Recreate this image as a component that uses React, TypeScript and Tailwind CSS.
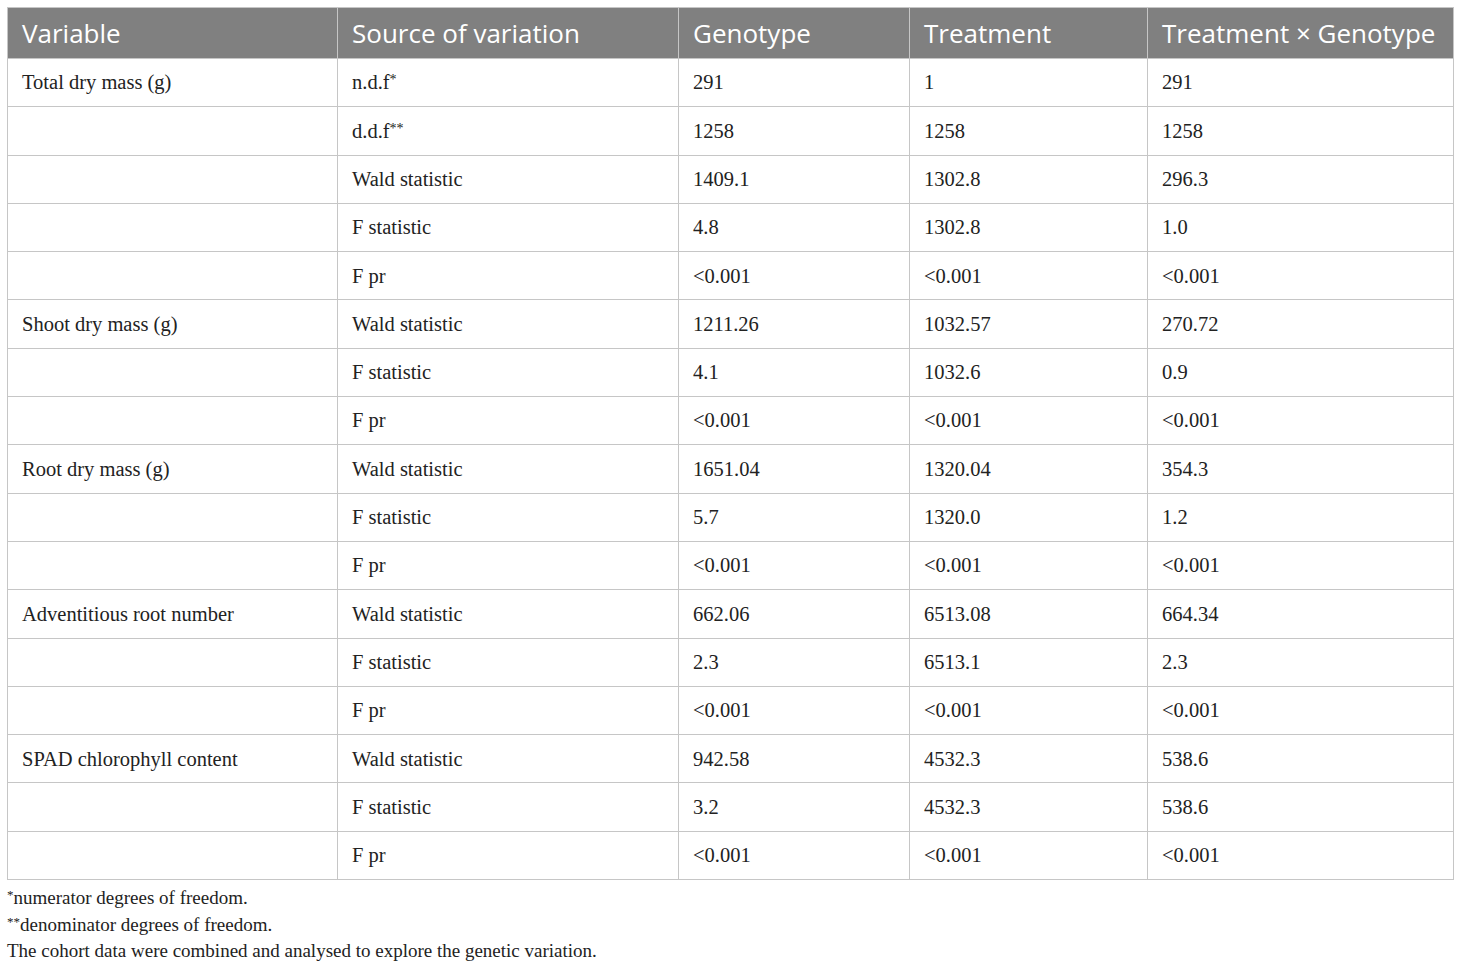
const rows: [string, string, string, string, string][] = [
  ['Total dry mass (g)', 'n.d.f*', '291', '1', '291'],
  ['', 'd.d.f**', '1258', '1258', '1258'],
  ['', 'Wald statistic', '1409.1', '1302.8', '296.3'],
  ['', 'F statistic', '4.8', '1302.8', '1.0'],
  ['', 'F pr', '<0.001', '<0.001', '<0.001'],
  ['Shoot dry mass (g)', 'Wald statistic', '1211.26', '1032.57', '270.72'],
  ['', 'F statistic', '4.1', '1032.6', '0.9'],
  ['', 'F pr', '<0.001', '<0.001', '<0.001'],
  ['Root dry mass (g)', 'Wald statistic', '1651.04', '1320.04', '354.3'],
  ['', 'F statistic', '5.7', '1320.0', '1.2'],
  ['', 'F pr', '<0.001', '<0.001', '<0.001'],
  ['Adventitious root number', 'Wald statistic', '662.06', '6513.08', '664.34'],
  ['', 'F statistic', '2.3', '6513.1', '2.3'],
  ['', 'F pr', '<0.001', '<0.001', '<0.001'],
  ['SPAD chlorophyll content', 'Wald statistic', '942.58', '4532.3', '538.6'],
  ['', 'F statistic', '3.2', '4532.3', '538.6'],
  ['', 'F pr', '<0.001', '<0.001', '<0.001'],
];

const headers = ['Variable', 'Source of variation', 'Genotype', 'Treatment', 'Treatment × Genotype'];
const widths = ['w-[330px]', 'w-[341px]', 'w-[231px]', 'w-[238px]', 'w-[306px]'];

function Source({ text }: { text: string }) {
  // asterisks sit raised like footnote marks
  const m = text.match(/^(.*?)(\*+)$/);
  if (!m) return <>{text}</>;
  return (
    <>
      {m[1]}
      <span className="relative -top-[5px] text-[14px]">{m[2]}</span>
    </>
  );
}

export default function App() {
  return (
    <div className="min-h-screen bg-white pt-[7px] pl-[7px] font-['Liberation_Serif',serif] text-[#222]">
      <table className="table-fixed border-collapse w-[1446px]">
        <thead>
          <tr className="h-[51px] bg-[#808080]">
            {headers.map((h, i) => (
              <th
                key={h}
                className={`${widths[i]} border border-[#c6c6c6] pl-[14px] text-left align-middle font-normal text-white text-[26px] leading-none font-['Open_Sans',sans-serif]`}
              >
                {h}
              </th>
            ))}
          </tr>
        </thead>
        <tbody>
          {rows.map((r, ri) => (
            <tr key={ri} className="h-[48.3px]">
              {r.map((c, ci) => (
                <td key={ci} className="border border-[#c6c6c6] pl-[14px] align-middle text-[20.5px] leading-none">
                  {ci === 1 ? <Source text={c} /> : c}
                </td>
              ))}
            </tr>
          ))}
        </tbody>
      </table>
      <div className="mt-[6px] text-[19px] leading-[24.5px]">
        <p>
          <span className="relative -top-[5px] text-[13px]">*</span>numerator degrees of freedom.
        </p>
        <p>
          <span className="relative -top-[5px] text-[13px]">**</span>denominator degrees of freedom.
        </p>
        <p>The cohort data were combined and analysed to explore the genetic variation.</p>
      </div>
    </div>
  );
}
